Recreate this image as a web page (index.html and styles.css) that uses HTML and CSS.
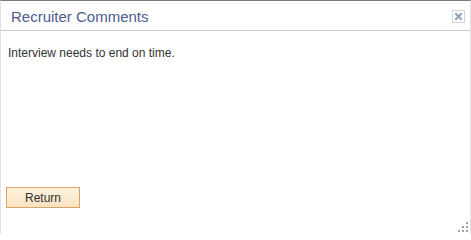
FILE: index.html
```html
<!DOCTYPE html>
<html>
<head>
<meta charset="utf-8">
<link rel="stylesheet" href="styles.css">
</head>
<body>
<div class="dialog">
  <div class="header">
    <span class="title">Recruiter Comments</span>
    <span class="close" title="Close">
      <svg width="11" height="11" viewBox="0 0 11 11"><path d="M3 3 L8 8 M8 3 L3 8" stroke="#8fa2b8" stroke-width="2" stroke-linecap="square"/></svg>
    </span>
  </div>
  <div class="content">
    <p class="comment">Interview needs to end on time.</p>
  </div>
  <div class="footer">
    <button class="btn">Return</button>
  </div>
  <svg class="grip" width="12" height="12" viewBox="0 0 12 12">
    <rect x="9" y="1" width="2" height="2" fill="#a0a0a0"/>
    <rect x="9" y="5" width="2" height="2" fill="#a0a0a0"/>
    <rect x="5" y="5" width="2" height="2" fill="#a0a0a0"/>
    <rect x="9" y="9" width="2" height="2" fill="#a0a0a0"/>
    <rect x="5" y="9" width="2" height="2" fill="#a0a0a0"/>
    <rect x="1" y="9" width="2" height="2" fill="#a0a0a0"/>
  </svg>
</div>
</body>
</html>
```
FILE: styles.css
```css
html, body {
  margin: 0;
  padding: 0;
  background: #fff;
}
.dialog {
  position: relative;
  box-sizing: border-box;
  width: 471px;
  height: 234px;
  border-top: 1px solid #7a7a7a;
  border-left: 1px solid #e2e2e2;
  border-right: 1px solid #e2e2e2;
  display: flex;
  flex-direction: column;
  font-family: "Liberation Sans", Arial, sans-serif;
}
.header {
  height: 29px;
  border-bottom: 1px solid #c8ccd2;
  display: flex;
  align-items: center;
  padding: 0 5px 0 10px;
}
.title {
  flex: 1;
  font-size: 15px;
  color: #4d5b8e;
  padding-top: 2px;
}
.close {
  box-sizing: border-box;
  width: 13px;
  height: 13px;
  border: 1px solid #d4d4d4;
  display: flex;
  align-items: center;
  justify-content: center;
  margin-top: 1px;
}
.content {
  flex: 1;
  padding: 0 7px;
}
.comment {
  margin: 15px 0 0 0;
  font-size: 12px;
  color: #333;
}
.footer {
  padding: 0 0 26px 5px;
}
.btn {
  box-sizing: border-box;
  width: 74px;
  height: 21px;
  border: 1px solid #d8a46c;
  border-radius: 0;
  background: linear-gradient(#fdf2de, #fbe3bf);
  font-family: "Liberation Sans", Arial, sans-serif;
  font-size: 12px;
  color: #333;
  padding: 0;
}
.grip {
  position: absolute;
  right: 1px;
  bottom: 1px;
}
```
